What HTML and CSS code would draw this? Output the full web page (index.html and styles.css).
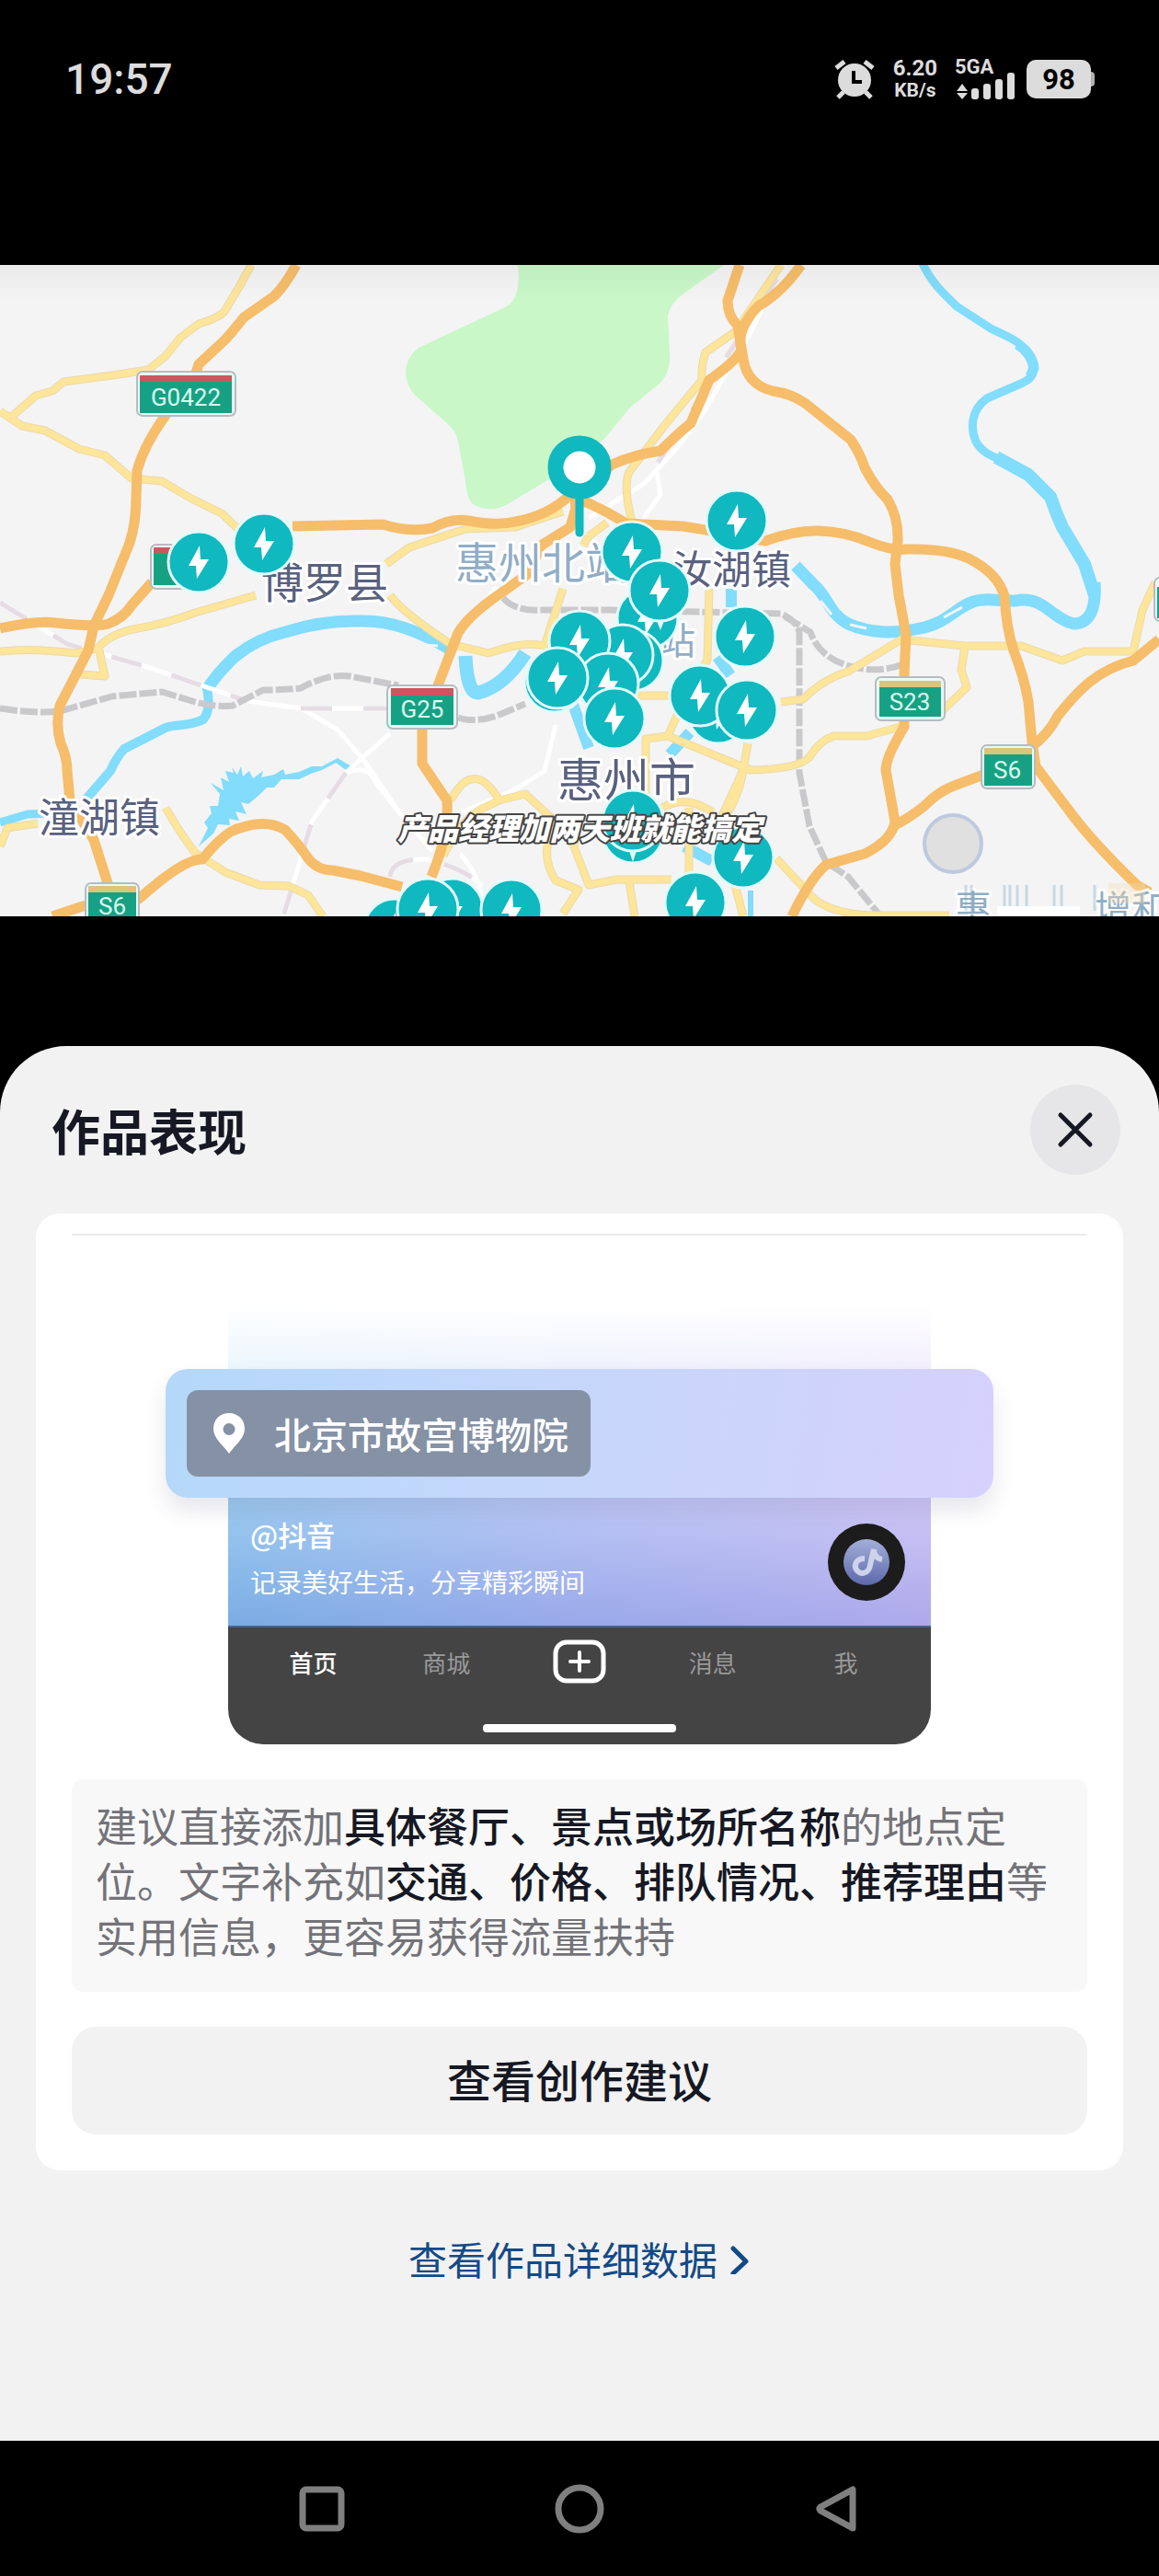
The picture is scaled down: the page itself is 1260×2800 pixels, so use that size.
FILE: index.html
```html
<!DOCTYPE html>
<html lang="zh-CN">
  <head>
    <meta charset="UTF-8" />
    <meta name="viewport" content="width=device-width, initial-scale=1.0" />
    <title>作品表现</title>
    <link rel="stylesheet" href="styles.css">
  </head>
  <body>
    <header class="status-bar">
      <time class="status-time">19:57</time>
      <div class="status-icons">
        <svg class="alarm-icon" width="44" height="44" viewBox="0 0 44 44" fill="none" stroke="#dcdcdc" stroke-width="5">
          <path d="M2 10l9-7M42 10l-9-7M10 36l-6 6M34 36l6 6"></path>
          <circle cx="22" cy="23" r="18" fill="#dcdcdc" stroke="none"></circle>
          <path d="M21 13v12h9" stroke="#000" stroke-width="4"></path>
        </svg>
        <div class="net-speed">
          <span>6.20</span>
          <span class="net-unit">KB/s</span>
        </div>
        <div class="signal">
          <span>5GA</span>
          <svg width="66" height="30" viewBox="0 0 66 30" fill="#dcdcdc">
            <path d="M2 21l6-8 6 8zM2 23l6 7 6-7z"></path>
            <rect x="18" y="18" width="8" height="12" rx="3"></rect>
            <rect x="31" y="13" width="8" height="17" rx="3"></rect>
            <rect x="44" y="8" width="8" height="22" rx="3"></rect>
            <rect x="57" y="1" width="8" height="29" rx="3"></rect>
          </svg>
        </div>
        <div class="battery">98</div>
      </div>
    </header>

    <section class="video">
      <svg class="map" viewBox="0 0 1260 708">
        <defs>
          <g id="bolt-pin">
            <circle r="33" fill="#10b8bf" stroke="#e3fbfb" stroke-width="3"></circle>
            <path d="M1-18L-11 4h8L-2 18 11-3H2z" fill="#fff"></path>
          </g>
          <g id="minor-roads">
            <path d="M273 0L261 22 245 49Q240 57 216 64L196 79 180 99 161 114 122 120 69 127 57 137 39 142 10 167M0 159L24 175 49 180 86 200 114 207 143 232 176 235 208 254 241 270 262 290"></path>
            <path d="M0 420Q35 416 82 422L106 417Q120 400 150 395 180 390 212 378L278 359M108 419L114 447 88 445M420 325L445 307 506 287 560 285 612 268"></path>
            <path d="M849 0L800 72 767 95Q762 110 763 125L722 175 684 225Q677 240 687 279"></path>
            <path d="M424 359Q440 380 490 412L531 422Q570 408 592 414L612 352M490 582Q515 535 543 582L571 575 604 605Q585 640 604 669L629 679 612 705M482 642Q500 605 522 592L543 582M629 600L624 632 640 674 670 668H730M749 590V669M684 670L690 708"></path>
            <path d="M180 590L195 615 212 639 245 660 282 674 314 675 335 685 351 708M0 632L8 612 41 607"></path>
            <path d="M849 475L873 472Q895 450 922 442L980 407 1049 414H1110L1155 430 1179 420H1232L1242 375 1256 345M1049 415L1045 440 1051 459 1024 485"></path>
            <path d="M979 502L942 512H906Q890 518 880 535 868 548 816 549L726 512 702 515V590M726 512L745 470 769 429 771 352M690 468H730M813 520L808 549Q802 585 783 605L790 640 808 708M808 549L780 610M720 590Q745 575 775 595M844 645L885 689Q905 705 947 707H1032M640 295L660 280M640 295L634 305"></path>
          </g>
          <linearGradient id="shade" x1="0" y1="0" x2="0" y2="1">
            <stop offset="0" stop-color="#000" stop-opacity=".04"></stop>
            <stop offset="1" stop-color="#000" stop-opacity="0"></stop>
          </linearGradient>
        </defs>
        <rect width="1260" height="708" fill="#f4f4f5"></rect>

        <!-- park -->
        <path class="park" d="M563 0Q567 34 551 45L455 90Q436 105 443 128 446 137 455 145L486 172Q497 182 498 192L506 235Q508 258 516 261 534 270 552 260L610 225 657 189 685 155 718 128Q730 115 728 95L726 55Q730 40 742 32L787 0z"></path>

        <!-- water -->
        <g class="water">
          <path d="M490 418C455 398 425 386 392 387 360 386 335 391 310 399 285 405 268 415 255 426 240 440 232 450 224 463" stroke-width="13"></path>
          <path d="M224 455C228 475 228 485 221 494 205 502 190 499 180 503L135 526Q126 536 120 550L94 580" stroke-width="10"></path>
          <path d="M60 596L30 597 0 606" stroke-width="9"></path>
          <path d="M1002 -4C1012 20 1030 35 1040 45L1077 69C1095 78 1110 83 1116 95 1128 115 1124 122 1112 128L1073 145C1055 158 1055 178 1061 192 1068 205 1080 208 1095 215" stroke-width="9"></path>
          <path d="M1106 86Q1122 96 1124 112L1120 121" stroke-width="11"></path>
          <path d="M1083 209L1118 228 1142 252Q1148 270 1155 285L1179 325 1190 359" stroke-width="14"></path>
          <path d="M1190 345C1192 375 1184 390 1167 390 1145 385 1135 362 1110 364 1095 368 1075 360 1058 366 1040 372 1030 388 1005 394 970 402 945 400 922 390 900 378 900 360 885 348L865 327" stroke-width="13"></path>
          <path d="M506 425Q508 466 520 465 548 458 571 422" stroke-width="15"></path>
          <path d="M622 475L640 525M795 352v20M750 508l-22 24M780 426l14 20M744 632l30 16" stroke-width="12"></path>
          <path d="M816 680v28" stroke-width="6"></path>
        </g>
        <path fill="#82dcfb" d="M216 632L226 612 222 606 230 596 228 588 237 588 239 575 229 563 243 571 240 557 249 562 245 550 254 552 252 546 258 554 262 545 264 556 271 550 275 558 286 550 284 557 298 554 308 548 310 554 325 551 339 545 350 545 367 536 382 545 379 551 365 541 350 549 338 553 325 559 306 559 298 568 290 568 282 576 270 586 262 584 268 597 256 594 260 604 249 602 250 609 237 608 232 618z"></path>
        <path d="M441 404q15 10 35 10M924 391l18 4M1026 383l20-11M892 365l12 15" stroke="#f4f4f5" stroke-width="3" fill="none"></path>

        <!-- railways -->
        <g class="rail-light">
          <path d="M0 367L73 412 160 437 269 474 327 482 367 505 396 539 437 599 470 637"></path>
          <path d="M327 482h93M424 509L376 552 339 605 308 708M376 552q25-10 32 10L437 599"></path>
          <path d="M845 15L815 75 788 120 765 160 735 200 700 238 640 275M714 225l4 25-15 20-10 20"></path>
          <path d="M424 665q2-20 40-19 40 10 60 28M540 350L500 400 480 450M604 500L592 550 560 570 502 595M500 640q20 20 24 50"></path>
        </g>
        <g class="rail-dash">
          <path d="M424 665q2-20 40-19 40 10 60 28M0 367L73 412 160 437 269 474M327 482h93M376 552L339 605 308 708M845 15L700 238"></path>
        </g>
        <g class="rail">
          <path d="M0 482Q40 488 65 485L122 469 176 464 212 475Q235 481 253 479L286 462Q310 462 327 460 355 444 380 447L433 457"></path>
          <path d="M498 492Q515 498 540 490L571 477M547 362Q560 377 590 375L661 375 849 379Q868 388 869 400L869 552 880 610 898 649 922 665 955 705M853 382L881 399Q890 425 920 435 955 446 987 432"></path>
        </g>

        <!-- roads -->
        <use class="road road-edge" href="#minor-roads"></use>
        <use class="road road-yellow" href="#minor-roads"></use>
        <g class="road road-orange">
          <path d="M322 0Q310 22 298 34L265 57Q255 70 245 81L216 108 212 120 176 169Q155 200 149 224L148 252Q148 280 141 302L118 359 102 392 96 419 65 479Q60 500 66 520 73 535 73 550L76 582 102 625 118 675"></path>
          <path d="M0 395Q40 386 61 389 105 394 118 390 135 383 143 370L165 345M318 284L416 282Q445 291 470 286 490 275 510 278 540 284 560 279 595 273 620 250M620 258H638Q660 268 681 281L742 284 767 288 832 300Q865 288 890 289 920 290 945 301 970 311 985 309 1030 308 1053 319 1085 335 1092 360 1094 395 1102 419 1114 450 1118 475L1122 519 1126 545Q1145 570 1160 590 1185 625 1236 674L1250 682"></path>
          <path d="M804 0L791 39Q791 55 802 66L808 102Q812 130 840 137 860 140 875 150L925 190Q935 205 940 220 950 240 965 255 977 275 976 300L973 325 977 359 985 402 983 445V502Q963 535 963 549L973 605Q970 625 940 640L898 652Q880 668 861 708"></path>
          <path d="M973 609Q990 600 1005 588 1020 572 1040 565L1080 550M1120 525Q1140 510 1150 490 1170 465 1185 453 1205 437 1232 430L1260 407"></path>
          <path d="M871 0Q850 30 824 45 800 70 806 92 800 105 771 125L751 172Q735 185 718 202 690 206 665 217L630 250 620 285 588 305 575 335 547 355Q510 380 498 400L478 452 459 505V542L486 582Q488 620 469 665"></path>
          <path d="M57 708L90 697 151 689Q200 645 220 646 245 615 261 612 290 602 310 614 325 630 335 645 345 658 362 658L392 664 437 676"></path>
        </g>

        <!-- road shields -->
        <g class="shield">
          <rect x="149" y="116" width="107" height="48" rx="6"></rect>
          <path class="green" d="M152 127h100v34h-100z"></path><path class="red" d="M152 120h100v7h-100z"></path>
          <text x="202" y="153">G0422</text>
          <rect x="164" y="304" width="56" height="48" rx="6"></rect>
          <path class="green" d="M167 314h40v34h-40z"></path><path class="red" d="M167 307h40v7h-40z"></path>
          <rect x="421" y="457" width="76" height="47" rx="6"></rect>
          <path class="green" d="M425 468h68v32h-68z"></path><path class="red" d="M425 460h68v8h-68z"></path>
          <text x="459" y="492">G25</text>
          <rect x="93" y="672" width="58" height="47" rx="6"></rect>
          <path class="green" d="M96 682h52v32h-52z"></path><path class="tan" d="M96 675h52v7h-52z"></path>
          <text x="122" y="706">S6</text>
          <rect x="952" y="448" width="75" height="47" rx="6"></rect>
          <path class="green" d="M956 459h67v32h-67z"></path><path class="tan" d="M956 452h67v7h-67z"></path>
          <text x="989" y="484">S23</text>
          <rect x="1067" y="522" width="58" height="47" rx="6"></rect>
          <path class="green" d="M1070 532h52v34h-52z"></path><path class="tan" d="M1070 525h52v7h-52z"></path>
          <text x="1095" y="558">S6</text>
          <rect x="1255" y="340" width="30" height="47" rx="6"></rect>
          <path class="green" d="M1258 350h20v34h-20z"></path>
        </g>

        <!-- place names -->
        <g class="place">
          <text class="place-rail" x="495" y="341" font-size="47">惠州北站</text>
          <text class="place-rail" x="716" y="423" font-size="40">站</text>
          <text x="284" y="362" font-size="46">博罗县</text>
          <text x="731" y="347" font-size="43">汝湖镇</text>
          <text x="42" y="617" font-size="44">潼湖镇</text>
          <text x="606" y="578" font-size="50">惠州市</text>
          <text class="place-rail" x="1038" y="714" font-size="40">惠</text>
          <text class="place-rail" x="1190" y="714" font-size="40">增和</text>
        </g>
        <g opacity=".35">
          <path d="M1050 674v28M1056 674v28M1092 674v28M1098 674v28M1106 674v28M1116 674v28M1146 674v28M1154 674v28M1190 674v28" stroke="#7aa5bd" stroke-width="3"></path>
          <path d="M1205 672h40v22h-40z" fill="#f5dfb4"></path>
        </g>
        <path d="M1084 697h90v11h-90z" fill="#fff"></path>

        <circle cx="1036" cy="629" r="31" fill="#e0e0e0" stroke="#bdc9df" stroke-width="4"></circle>

        <!-- charging stations -->
        <use href="#bolt-pin" x="704" y="384"></use>
        <use href="#bolt-pin" x="216" y="323"></use>
        <use href="#bolt-pin" x="287" y="303"></use>
        <use href="#bolt-pin" x="801" y="278"></use>
        <use href="#bolt-pin" x="687" y="312"></use>
        <use href="#bolt-pin" x="717" y="354"></use>
        <use href="#bolt-pin" x="810" y="404"></use>
        <use href="#bolt-pin" x="688" y="430"></use>
        <use href="#bolt-pin" x="677" y="424"></use>
        <use href="#bolt-pin" x="630" y="409"></use>
        <use href="#bolt-pin" x="661" y="455"></use>
        <use href="#bolt-pin" x="603" y="453"></use>
        <use href="#bolt-pin" x="606" y="449"></use>
        <use href="#bolt-pin" x="668" y="493"></use>
        <use href="#bolt-pin" x="781" y="487"></use>
        <use href="#bolt-pin" x="761" y="468"></use>
        <use href="#bolt-pin" x="812" y="484"></use>
        <use href="#bolt-pin" x="688" y="617"></use>
        <use href="#bolt-pin" x="688" y="604"></use>
        <use href="#bolt-pin" x="808" y="644"></use>
        <use href="#bolt-pin" x="756" y="693"></use>
        <use href="#bolt-pin" x="429" y="722"></use>
        <use href="#bolt-pin" x="492" y="700"></use>
        <use href="#bolt-pin" x="465" y="700"></use>
        <use href="#bolt-pin" x="556" y="701"></use>
        <path d="M684 637h8l-4 12zM714 387h8l-4 10z" fill="#e3fbfb"></path>

        <!-- current position -->
        <path d="M630 245v46" stroke="#10b8bf" stroke-width="9" stroke-linecap="round"></path>
        <circle cx="630" cy="220" r="26" fill="#fff" stroke="#10b8bf" stroke-width="17"></circle>

        <text class="caption" x="630" y="625">产品经理加两天班就能搞定</text>
        <rect width="1260" height="40" fill="url(#shade)"></rect>
      </svg>
    </section>

    <main class="sheet">
      <div class="sheet-header">
        <h1>作品表现</h1>
        <button class="close-button" type="button" aria-label="关闭">
          <svg width="40" height="40" viewBox="0 0 40 40" fill="none" stroke="#161823" stroke-width="5" stroke-linecap="round">
            <path d="M4 4l32 32M36 4L4 36"></path>
          </svg>
        </button>
      </div>

      <section class="card">
        <hr class="divider" />

        <div class="preview">
          <div class="fade"></div>
          <div class="banner">
            <div class="location">
              <svg width="34" height="44" viewBox="0 0 34 44">
                <path fill="#fff" fill-rule="evenodd" d="M17 0C7 0 0 7 0 17c0 11 11 18 17 27 6-9 17-16 17-27C34 7 27 0 17 0zm0 11a6 6 0 1 1 0 13 6 6 0 0 1 0-13z"></path>
              </svg>
              <span>北京市故宫博物院</span>
            </div>
          </div>
          <div class="post">
            <div class="post-text">
              <strong>@抖音</strong>
              <p>记录美好生活，分享精彩瞬间</p>
            </div>
            <svg class="disc" width="84" height="84" viewBox="0 0 84 84">
              <defs>
                <linearGradient id="disc-fill" x1="0" y1="0" x2="0" y2="1">
                  <stop offset="0" stop-color="#a3afd8"></stop>
                  <stop offset="1" stop-color="#5c69ab"></stop>
                </linearGradient>
              </defs>
              <circle cx="42" cy="42" r="42" fill="#1c1c1c"></circle>
              <circle cx="42" cy="42" r="25" fill="url(#disc-fill)"></circle>
              <path d="M40 38c-9 0-12 7-9 12 4 7 14 4 15-5l4-17c0 6 3 10 9 11" fill="none" stroke="#ccd3ea" stroke-width="6"></path>
            </svg>
          </div>
          <div class="tabs">
            <span class="active">首页</span>
            <span>商城</span>
            <svg width="58" height="48" viewBox="0 0 58 48" fill="none" stroke="#fff" stroke-width="5">
              <rect x="3" y="3" width="52" height="42" rx="12"></rect>
              <path d="M29 14v20M19 24h20" stroke-width="4" stroke-linecap="round"></path>
            </svg>
            <span>消息</span>
            <span>我</span>
          </div>
          <div class="home-area">
            <div class="home-indicator"></div>
          </div>
        </div>

        <p class="tip">建议直接添加<b>具体餐厅、景点或场所名称</b>的地点定位。文字补充如<b>交通、价格、排队情况、推荐理由</b>等实用信息，更容易获得流量扶持</p>
        <button class="advice-button" type="button">查看创作建议</button>
      </section>

      <a class="detail-link" href="#">
        <span>查看作品详细数据</span>
        <svg width="22" height="34" viewBox="0 0 22 34" fill="none" stroke="#134a85" stroke-width="5" stroke-linecap="round" stroke-linejoin="round">
          <path d="M3 6l14 14L3 33"></path>
        </svg>
      </a>
    </main>

    <nav class="system-nav">
      <button type="button" aria-label="最近任务">
        <svg width="54" height="54" viewBox="0 0 54 54"><rect x="6" y="6" width="42" height="42" rx="4"></rect></svg>
      </button>
      <button type="button" aria-label="主页">
        <svg width="54" height="54" viewBox="0 0 54 54"><circle cx="27" cy="27" r="23"></circle></svg>
      </button>
      <button type="button" aria-label="返回">
        <svg width="54" height="54" viewBox="0 0 54 54"><path d="M9 25L44 6v42L9 29q-2-2 0-4z"></path></svg>
      </button>
    </nav>
  </body>
</html>
```

FILE: styles.css
```css
* {
  box-sizing: border-box;
}

body {
  font-family: "Noto Sans CJK SC", sans-serif;
  margin: 0;
  min-height: 100vh;
  display: flex;
  flex-direction: column;
  background-color: #000;
  color: #161823;
}

button {
  border: none;
  padding: 0;
  font-family: inherit;
  color: inherit;
  cursor: pointer;
}

h1,
p {
  margin: 0;
}

svg {
  display: block;
  flex-shrink: 0;
}

.status-bar {
  height: 172px;
  padding: 0 74px 0 71px;
  display: flex;
  align-items: center;
  justify-content: space-between;
  font-family: Roboto, sans-serif;
  color: #dcdcdc;
}

.status-time {
  font-size: 46px;
  font-weight: 500;
}

.status-icons {
  display: flex;
  align-items: center;
  font-weight: 700;
}

.net-speed {
  margin-left: 20px;
  display: flex;
  flex-direction: column;
  align-items: center;
  font-size: 24px;
  line-height: 24px;
}

.net-unit {
  font-size: 21px;
}

.signal {
  margin: 0 12px 0 19px;
  font-size: 22px;
  line-height: 16px;
}

.signal svg {
  margin-top: -3px;
}

.battery {
  width: 70px;
  height: 42px;
  border-radius: 10px;
  background-color: #dcdcdc;
  color: #000;
  font-size: 31px;
  line-height: 43px;
  text-align: center;
  position: relative;
}

.battery::after {
  content: "";
  position: absolute;
  top: 13px;
  right: -4px;
  width: 4px;
  height: 16px;
  border-radius: 0 4px 4px 0;
  background-color: #b0b0b0;
}

.video {
  padding: 116px 0 141px;
}

.map {
  width: 100%;
  height: auto;
}

.park {
  fill: #c9f7c8;
}

.water {
  fill: none;
  stroke: #82dcfb;
  stroke-linejoin: round;
}

.rail-light,
.rail-dash {
  fill: none;
  stroke: #fff;
  stroke-width: 5;
}

.rail-dash {
  stroke: #e6dce4;
  stroke-dasharray: 34 34;
}

.rail {
  fill: none;
  stroke: #c9c9cb;
  stroke-width: 7;
  stroke-dasharray: 19 3;
}

.road {
  fill: none;
  stroke-linejoin: round;
}

.road-edge {
  stroke: #ecd9ab;
  stroke-width: 9;
}

.road-yellow {
  stroke: #fde59a;
  stroke-width: 7;
}

.road-orange {
  stroke: #f6bd6a;
  stroke-width: 11;
}

.shield rect {
  fill: #e9fbf4;
  stroke: #b5bcc0;
  stroke-width: 2;
}

.shield text {
  fill: #d9fff0;
  font-family: Roboto, sans-serif;
  font-size: 26px;
  text-anchor: middle;
}

.green {
  fill: #17a184;
}

.red {
  fill: #cc5560;
}

.tan {
  fill: #dcc47c;
}

.place {
  fill: #59617f;
  stroke: #fff;
  stroke-width: 6px;
  stroke-linejoin: round;
  paint-order: stroke;
}

.place-rail {
  fill: #90adc6;
}

.caption {
  fill: #fff;
  stroke: #444;
  stroke-width: 4px;
  stroke-linejoin: round;
  paint-order: stroke;
  font-size: 33px;
  font-style: italic;
  font-weight: 900;
  text-anchor: middle;
}

.sheet {
  flex: 1;
  padding: 42px 39px 0;
  border-radius: 72px 72px 0 0;
  background-color: #f2f2f2;
}

.sheet-header {
  display: flex;
  align-items: center;
  justify-content: space-between;
  padding: 0 3px 0 17px;
  margin-bottom: 42px;
}

.sheet-header h1 {
  font-size: 53px;
  line-height: 98px;
  font-weight: 700;
}

.close-button {
  width: 98px;
  height: 98px;
  border-radius: 50%;
  background-color: #e6e6e8;
  display: flex;
  align-items: center;
  justify-content: center;
}

.card {
  padding: 22px 39px 39px;
  border-radius: 26px;
  background-color: #fff;
}

.divider {
  height: 2px;
  margin: 0 0 76px;
  border: none;
  background-color: #ececee;
}

.preview {
  max-width: 764px;
  margin: 0 auto;
  border-radius: 0 0 38px 38px;
  background-color: #444;
}

.fade {
  height: 69px;
  background: linear-gradient(#fff, rgba(255, 255, 255, 0.2)), linear-gradient(90deg, #e6f4fd, #f0ebfd);
}

.banner {
  position: relative;
  margin: 0 -68px;
  padding: 23px;
  border-radius: 24px;
  background: linear-gradient(100deg, #b4d8f9, #c5d7fb 45%, #d6d1fd);
  box-shadow: 0 14px 24px rgba(60, 60, 100, 0.12);
}

.location {
  width: fit-content;
  height: 94px;
  padding: 0 24px 0 29px;
  border-radius: 12px;
  background-color: #8591a5;
  display: flex;
  align-items: center;
  gap: 32px;
  color: #fff;
  font-size: 40px;
  font-weight: 500;
}

.post {
  height: 139px;
  padding: 0 28px 0 24px;
  background: linear-gradient(rgba(255, 255, 255, 0.22), rgba(70, 100, 190, 0.18)), linear-gradient(100deg, #83bdec, #abb8f3 50%, #c4b8f4);
  display: flex;
  align-items: center;
  justify-content: space-between;
  color: #fff;
}

.post-text {
  padding-bottom: 8px;
  font-size: 28px;
  line-height: 50px;
}

.post-text strong {
  font-size: 31px;
  font-weight: 500;
}

.tabs {
  height: 76px;
  padding: 0 20px;
  border-top: 2px solid #46648e;
  display: grid;
  grid-template-columns: repeat(5, 1fr);
  align-items: center;
  justify-items: center;
  color: #999;
  font-size: 26px;
}

.tabs .active {
  color: #fff;
  font-weight: 500;
}

.home-area {
  padding: 31px 0 13px;
}

.home-indicator {
  width: 210px;
  height: 9px;
  margin: 0 auto;
  border-radius: 4px;
  background-color: #fff;
}

.tip {
  margin: 38px 0;
  padding: 20px 26px 31px;
  border-radius: 12px;
  background-color: #f8f8f8;
  color: #737378;
  font-size: 45px;
  line-height: 60px;
}

.tip b {
  color: #161823;
  font-weight: 500;
}

.advice-button {
  width: 100%;
  height: 117px;
  padding-bottom: 6px;
  border-radius: 26px;
  background-color: #f2f2f2;
  font-size: 48px;
  font-weight: 500;
}

.detail-link {
  margin: 65px 0;
  display: flex;
  align-items: center;
  justify-content: center;
  gap: 14px;
  color: #134a85;
  font-size: 42px;
  line-height: 62px;
  text-decoration: none;
}

.system-nav {
  height: 147px;
  display: flex;
  align-items: center;
  justify-content: center;
  gap: 226px;
}

.system-nav button {
  background: none;
}

.system-nav svg {
  fill: none;
  stroke: #7f7f7f;
  stroke-width: 7;
  stroke-linejoin: round;
}
```
